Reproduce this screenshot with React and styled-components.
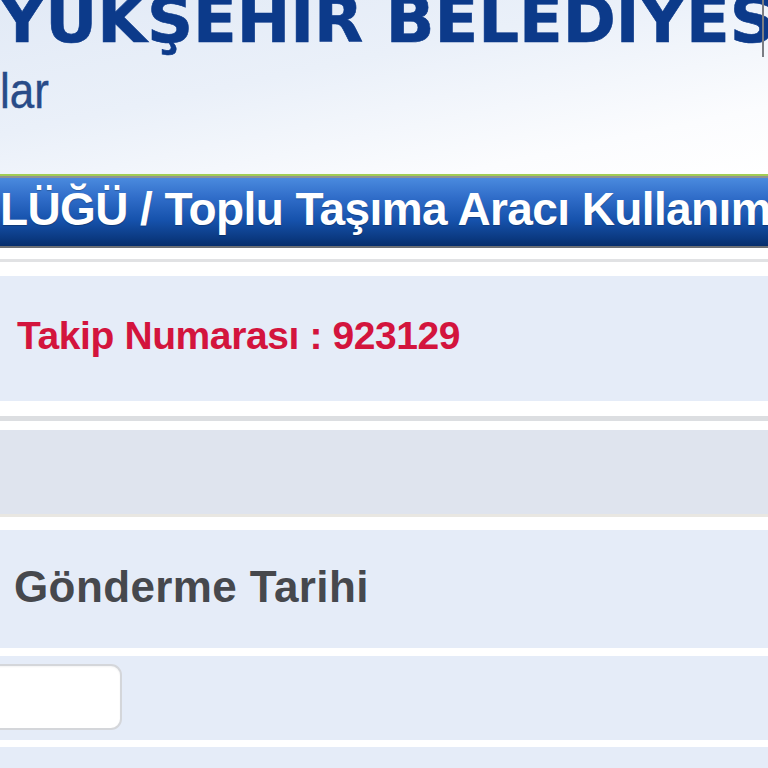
import React from 'react'
import styled, { createGlobalStyle } from 'styled-components'

const GlobalStyle = createGlobalStyle`
  html, body {
    margin: 0;
    padding: 0;
    background: #ffffff;
    overflow: hidden;
  }
  * { box-sizing: border-box; }
`

const Page = styled.div`
  width: 768px;
  height: 768px;
  overflow: hidden;
  display: flex;
  flex-direction: column;
  font-family: "Liberation Sans", Arial, sans-serif;
`

const Header = styled.header`
  position: relative;
  height: 174px;
  flex-shrink: 0;
  overflow: hidden;
  background: linear-gradient(168deg, #e2eaf6 0%, #eaf0f9 40%, #fbfcfe 80%, #ffffff 100%);
`

const Title = styled.h1`
  margin: -12px 0 0 -1px;
  font-family: "DejaVu Sans", Verdana, sans-serif;
  font-weight: bold;
  font-size: 64px;
  line-height: 64px;
  color: #0c3a8a;
  -webkit-text-stroke: 0.6px #0c3a8a;
  white-space: nowrap;
`

const Subtitle = styled.div`
  margin-top: 14px;
  font-size: 50px;
  line-height: 50px;
  color: #284b88;
  -webkit-text-stroke: 0.4px #284b88;
  white-space: nowrap;
  transform: scaleX(0.88);
  transform-origin: left center;
`

const Caret = styled.span`
  position: absolute;
  top: 0;
  right: 4px;
  width: 2px;
  height: 57px;
  background: #7a7d83;
`

const GreenRule = styled.div`
  height: 4px;
  flex-shrink: 0;
  background: #a2cd54;
  border-bottom: 2px solid #8d9296;
`

const TitleBar = styled.div`
  height: 68px;
  flex-shrink: 0;
  overflow: hidden;
  background: linear-gradient(180deg, #4a8ade 0%, #2f6cc8 30%, #1652ac 62%, #0b3a82 88%, #072e6c 100%);
  color: #ffffff;
  font-weight: bold;
  font-size: 46px;
  line-height: 62px;
  letter-spacing: -0.6px;
  white-space: nowrap;
  text-shadow: 0 1px 1px rgba(0, 0, 0, 0.25);
`

const Spacer = styled.div`
  flex-shrink: 0;
  height: ${p => p.h}px;
  background: ${p => p.color || '#ffffff'};
`

const Panel = styled.div`
  flex-shrink: 0;
  height: ${p => p.h}px;
  background: ${p => (p.muted ? '#dfe4ee' : '#e5ecf8')};
  display: flex;
  align-items: ${p => (p.top ? 'flex-start' : 'center')};
  padding-left: ${p => p.pad || 0}px;
`

const TrackNo = styled.div`
  font-weight: bold;
  font-size: 39px;
  letter-spacing: -0.4px;
  color: #d3143d;
  white-space: nowrap;
  margin-top: -6px;
`

const FieldLabel = styled.div`
  font-weight: bold;
  font-size: 44px;
  letter-spacing: 0.4px;
  color: #46484d;
  white-space: nowrap;
  margin-top: -4px;
`

const DateInput = styled.div`
  margin: 8px 0 0 -12px;
  width: 134px;
  height: 66px;
  background: #ffffff;
  border: 2px solid #d4d6da;
  border-radius: 11px;
  box-shadow: inset 0 1px 2px rgba(0, 0, 0, 0.05);
`

export default function App() {
  return (
    <Page>
      <GlobalStyle />
      <Header>
        <Title>YÜKŞEHİR BELEDİYESİ</Title>
        <Subtitle>lar</Subtitle>
        <Caret />
      </Header>
      <GreenRule />
      <TitleBar>LÜĞÜ / Toplu Taşıma Aracı Kullanım</TitleBar>
      <Spacer h={2} color="#6d7075" />
      <Spacer h={11} />
      <Spacer h={3} color="#e1e2e4" />
      <Spacer h={14} />
      <Panel h={125} pad={17}>
        <TrackNo>Takip Numarası : 923129</TrackNo>
      </Panel>
      <Spacer h={15} />
      <Spacer h={5} color="#dcdee1" />
      <Spacer h={9} />
      <Panel h={84} muted />
      <Spacer h={3} color="#e9e7e2" />
      <Spacer h={13} />
      <Panel h={118} pad={14}>
        <FieldLabel>Gönderme Tarihi</FieldLabel>
      </Panel>
      <Spacer h={8} />
      <Panel h={84} top>
        <DateInput />
      </Panel>
      <Spacer h={7} />
      <Panel h={40} />
    </Page>
  )
}
